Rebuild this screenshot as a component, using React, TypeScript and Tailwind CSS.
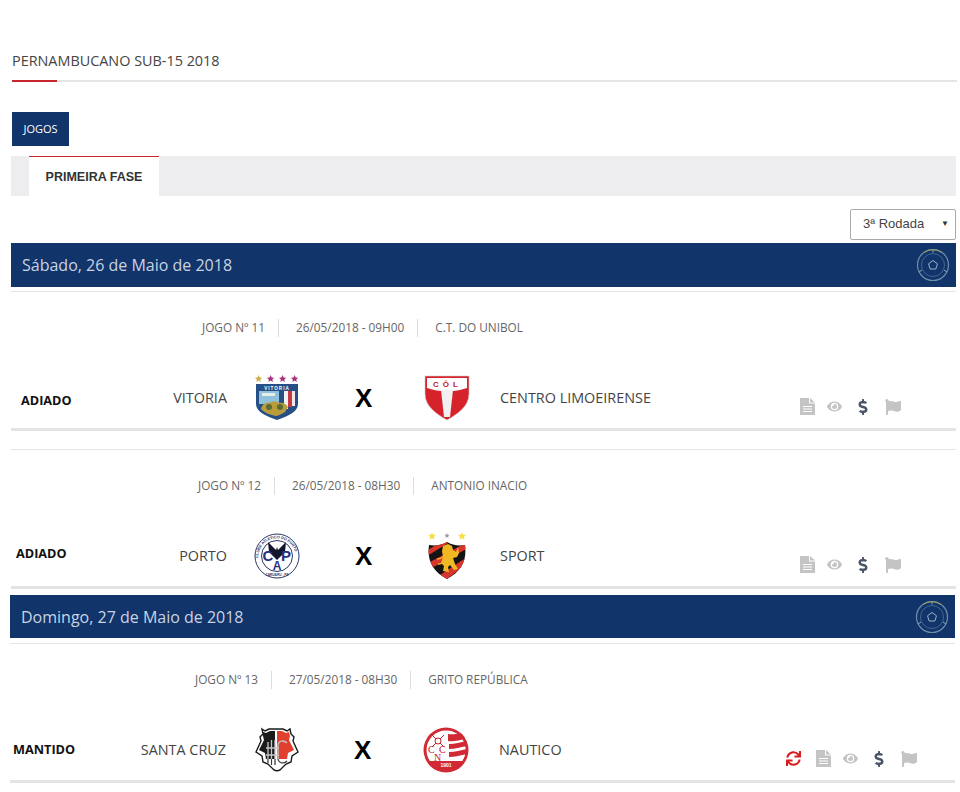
import type { ReactNode } from "react";
import { FaDollarSign, FaEye, FaFlag, FaSync } from "react-icons/fa";

const STAR = "M5 0l1.500 3.300 3.500.4-2.600 2.400.7 3.500L5 7.800 1.900 9.600l.7-3.500L0 3.700l3.500-.4z";

const VitoriaCrest = () => (
  <svg viewBox="0 0 46 46" className="h-[46px] w-[46px]">
    <defs>
      <clipPath id="vit-shield">
        <path d="M2 9h42v20c0 8-10 12-21 16C12 41 2 37 2 29z" />
      </clipPath>
    </defs>
    <path d={STAR} fill="#c9b04a" transform="translate(1 0) scale(.72)" />
    <path d={STAR} fill="#a6307a" transform="translate(13 0) scale(.72)" />
    <path d={STAR} fill="#a6307a" transform="translate(25 0) scale(.72)" />
    <path d={STAR} fill="#a6307a" transform="translate(37 0) scale(.72)" />
    <g clipPath="url(#vit-shield)">
      <rect width="46" height="46" fill="#254f85" />
      <rect x="5" y="16" width="23" height="13" fill="#8fc0dc" />
      <rect x="8" y="18" width="13" height="3" fill="#e4efe8" />
      <rect x="25" y="16" width="5" height="20" fill="#254f85" />
      <rect x="30" y="16" width="4" height="18" fill="#f2f2f2" />
      <rect x="34" y="16" width="4" height="16" fill="#c23a44" />
      <rect x="38" y="16" width="3" height="15" fill="#f2e6e6" />
      <path d="M7 34c1-4 4-7 8-6 3-2 8-2 10 0 4-1 7 1 9 4l-3 5c-5 3-8 4-9 4-6-1-11-3-15-7z" fill="#b99c3c" />
      <circle cx="15" cy="32" r="3" fill="#5c6a34" />
      <circle cx="26" cy="32" r="3" fill="#5c6a34" />
    </g>
    <text x="23" y="14.500" textAnchor="middle" fontSize="4.600" fontWeight="700" fill="#fff" fontFamily="'Liberation Sans', sans-serif" letterSpacing="1">VITORIA</text>
  </svg>
);

const LimoeirenseCrest = () => (
  <svg viewBox="0 0 46 46" className="h-[46px] w-[46px]">
    <path d="M1 1h44v18c0 12-11 20-22 26C12 39 1 31 1 19z" fill="#d5222b" stroke="#cfcfcf" strokeWidth=".6" />
    <path d="M3 3h40v10c-6 2-11 3-14 3H17c-3 0-8-1-14-3z" fill="#fff" />
    <path d="M17 15h12l-3 27h-6z" fill="#f1f1f1" />
    <text x="23.500" y="11.500" textAnchor="middle" fontSize="8" fontWeight="700" fill="#c8202a" fontFamily="'Liberation Sans', sans-serif" letterSpacing="4">CÔL</text>
  </svg>
);

const PortoCrest = () => (
  <svg viewBox="0 0 46 46" className="h-[46px] w-[46px]">
    <circle cx="23" cy="23" r="22" fill="#fff" stroke="#2a3566" strokeWidth="1" />
    <circle cx="23" cy="23" r="15.500" fill="#fff" stroke="#2a3566" strokeWidth="1" />
    <path id="porto-arc" d="M7 34A18.800 18.800 0 1 1 39 34" fill="none" />
    <text fontSize="3.800" fill="#2a3566" fontFamily="'Liberation Sans', sans-serif" fontWeight="700">
      <textPath href="#porto-arc" startOffset="12%">CLUBE ATLETICO DO PORTO</textPath>
    </text>
    <text x="23" y="43" textAnchor="middle" fontSize="3.200" fill="#2a3566" fontFamily="'Liberation Sans', sans-serif" fontWeight="700">CARUARU - PE</text>
    <path d="M14 9l8 8 1-3 1 3 8-8-1 10-5 5-3 3-3-3-5-5z" fill="#14162c" />
    <text x="14" y="28" textAnchor="middle" fontSize="15" fontWeight="700" fill="#26327e" fontFamily="'Liberation Sans', sans-serif">C</text>
    <text x="32" y="28" textAnchor="middle" fontSize="15" fontWeight="700" fill="#26327e" fontFamily="'Liberation Sans', sans-serif">P</text>
    <text x="23" y="37" textAnchor="middle" fontSize="12" fontWeight="700" fill="#26327e" fontFamily="'Liberation Sans', sans-serif">A</text>
  </svg>
);

const SportCrest = () => (
  <svg viewBox="0 0 46 46" className="h-[46px] w-[46px]">
    <defs>
      <clipPath id="sport-shield">
        <path d="M5 12c7 1 13 0 18-3 5 3 11 4 18 3 2 15-3 26-18 34C8 38 3 27 5 12z" />
      </clipPath>
    </defs>
    <path d={STAR} fill="#f4e04a" transform="translate(4 -1) scale(.8)" />
    <path d={STAR} fill="#f4e04a" transform="translate(34 -1) scale(.8)" />
    <path d={STAR} fill="#9a9aa0" transform="translate(20.500 0) scale(.5)" />
    <g clipPath="url(#sport-shield)">
      <rect width="46" height="46" fill="#141414" />
      <path d="M0 19L26 4l3 3L0 25zM0 32L46 8v6L2 38zM10 46l36-24v6L18 50z" fill="#d8362c" />
    </g>
    <path d="M19 13l5-2 4 2 1 4 3 2 2-5 1 6-2 4-4 1 2 6 3 5-4 1-4-5-2 2 1 5-6-1 1-5-3-3 2-6-1-6z" fill="#f0b823" />
    <path d="M13 26c3 0 5-1 7-3M14 31c3 0 5-1 6-3" stroke="#f0b823" strokeWidth="1.400" fill="none" />
  </svg>
);

const SantaCruzCrest = () => (
  <svg viewBox="0 0 46 46" className="h-[46px] w-[46px]">
    <path d="M9 2l3 2 4-2h14l4 2 3-2 1 5 3 3-1 4 5 11-6 4-1 6-5 2-6 6c-2 1-4 1-6 0l-6-6-5-2-1-6-6-4 5-11-1-4 3-3z" fill="#fff" stroke="#1a1a1a" strokeWidth="1.400" />
    <path d="M10 5l3 1 4-2h5v28H13l-1-6-6-3 5-10-1-4z" fill="#1b1b1b" />
    <path d="M36 5l-3 1-4-2h-5v28h10l1-6 6-3-5-10 1-4z" fill="#e2402f" />
    <g fill="none" stroke="#c8c8c8" strokeWidth="1.300">
      <path d="M15 15v21M18.500 13v25M22 13v25M13 21h13M13 28h13" />
      <path d="M34 16c-3-3-9-3-9 3v11c0 6 6 7 9 4" />
    </g>
    <g fill="none" stroke="#3a3a3a" strokeWidth="1.100">
      <path d="M15 32v4M18.500 32v6M22 32v6" />
      <path d="M25 32c1 5 6 5 9 2" />
    </g>
  </svg>
);

const NauticoCrest = () => (
  <svg viewBox="0 0 46 46" className="h-[46px] w-[46px]">
    <defs>
      <clipPath id="nautico-flag">
        <path d="M24 4h20v30H24z" />
      </clipPath>
    </defs>
    <circle cx="23" cy="23" r="22.500" fill="#d12a35" />
    <circle cx="23" cy="23" r="19.500" fill="#fff" />
    <g clipPath="url(#nautico-flag)">
      <circle cx="23" cy="23" r="19.500" fill="#fff" />
      <path d="M25 7c6 1 10-1 14 0l3 5c-6 1-11 3-17 2zM26 17c6 0 12-2 17-3l1 5c-7 1-12 3-18 3zM26 25c6 0 12-2 18-3v5c-6 1-12 3-18 3z" fill="#d12a35" />
    </g>
    <path d="M5 34h36c-4 7-10 11-18 11S9 41 5 34z" fill="#d12a35" />
    <text x="23" y="39.500" textAnchor="middle" fontSize="5" fontWeight="700" fill="#fff" fontFamily="'Liberation Sans', sans-serif">1901</text>
    <g fontFamily="'Liberation Serif', serif" fontSize="10" fill="#c5222d">
      <text x="5" y="26">C</text>
      <text x="16" y="26">C</text>
      <text x="11" y="33.500">N</text>
    </g>
    <path d="M9 8l12 12M21 8L9 20" stroke="#c5222d" strokeWidth="1" />
    <circle cx="15" cy="14" r="3" fill="#fff" stroke="#c5222d" strokeWidth="1" />
  </svg>
);

const BannerEmblem = () => (
  <svg viewBox="0 0 34 34" className="h-[34px] w-[34px]" fill="none">
    <circle cx="17" cy="17" r="15.500" stroke="#6f8fa8" strokeWidth="1.200" />
    <path d="M8 4.500A15.500 15.500 0 0 1 26 4.500" stroke="#8c9a6a" strokeWidth="1.200" />
    <circle cx="17" cy="17" r="11.500" stroke="#4f739c" strokeWidth=".8" />
    <path d="M17 12.500l4.500 3.300-1.700 5.200h-5.600l-1.700-5.200z" stroke="#9db1c8" strokeWidth="1" />
    <path d="M17 1.500v3M3 24l3-2M31 24l-3-2" stroke="#93a9bf" strokeWidth="1" />
  </svg>
);

const DocIcon = () => (
  <svg viewBox="0 0 15 17" className="h-[17px] w-[15px]" fill="currentColor">
    <path fillRule="evenodd" d="M0 0h9v5.500h6V17H0zM3 8v1h9V8zM3 10.500v1h9v-1zM3 13v1h9v-1z" />
    <path d="M10 0l5 4.500h-5z" />
  </svg>
);

type DayProps = { label: string; wrap: string };

const DayBanner = ({ label, wrap }: DayProps) => (
  <div className={`flex items-center justify-between bg-[#11346a] pl-[11px] pr-[6px] ${wrap}`}>
    <span className="text-[16px] text-[#c9d3e1]">{label}</span>
    <BannerEmblem />
  </div>
);

type MatchProps = {
  wrap: string;
  metaPad: string;
  game: string;
  date: string;
  place: string;
  status: string;
  statusClass: string;
  homeWidth: string;
  home: string;
  away: string;
  homeCrest: ReactNode;
  awayCrest: ReactNode;
  sync?: boolean;
  iconsPad: string;
};

const Match = (m: MatchProps) => (
  <div className={m.wrap}>
    <div className={`flex h-[18px] items-center text-[11.800px] text-[#666] ${m.metaPad}`}>
      <span className="border-r border-[#ddd] pr-[13px]">{m.game}</span>
      <span className="border-r border-[#ddd] pl-[17px] pr-[13px]">{m.date}</span>
      <span className="pl-[17px]">{m.place}</span>
    </div>
    <div className="mb-[3px] mt-[37px] flex h-[51px] items-center pb-[3px]">
      <span className={`shrink-0 text-[12.700px] font-bold text-[#111] ${m.statusClass}`}>{m.status}</span>
      <span className={`-mt-[1px] shrink-0 text-right text-[14.400px] text-[#444] ${m.homeWidth}`}>{m.home}</span>
      <div className="ml-[27px] shrink-0">{m.homeCrest}</div>
      <span className="ml-[55px] w-[16px] shrink-0 text-[26px] font-bold leading-none text-black [font-family:'Liberation_Sans',sans-serif]">X</span>
      <div className="ml-[53px] shrink-0">{m.awayCrest}</div>
      <span className="-mt-[1px] ml-[30px] text-[14.400px] text-[#444]">{m.away}</span>
      <div className={`ml-auto mt-[17px] flex items-center text-[#c4c4c4] ${m.iconsPad}`}>
        {m.sync && <FaSync className="mr-[15px] text-[15px] text-[#d81e1e]" />}
        <DocIcon />
        <FaEye className="ml-[12px] text-[15px]" />
        <FaDollarSign className="ml-[13px] text-[16px] text-[#4a5568]" />
        <FaFlag className="ml-[14px] text-[16px]" />
      </div>
    </div>
    <div className="h-[3px] bg-[#e4e4e4]" />
  </div>
);

export default function App() {
  return (
    <div className="h-[792px] w-[960px] overflow-hidden bg-white pt-[50px] [font-family:'Open_Sans',sans-serif]">
      <h1 className="ml-[12px] pb-[8px] text-[14.400px] leading-[22px] text-[#444]">PERNAMBUCANO SUB-15 2018</h1>
      <div className="ml-[12px] mr-[3px] flex h-[2px] bg-[#e6e6e6]">
        <div className="w-[45px] bg-[#c8262e]" />
      </div>

      <button className="ml-[12px] mt-[30px] block h-[34px] w-[57px] bg-[#11346a] text-center text-[11px] font-medium text-white">JOGOS</button>

      <div className="ml-[11px] mr-[4px] mt-[10px] h-[40px] bg-[#eeeef0] pl-[18px]">
        <div className="flex h-[40px] w-[130px] items-center justify-center border-t border-[#c8262e] bg-white pt-[1px] text-[12.500px] font-bold text-[#333] [font-family:'Liberation_Sans',sans-serif]">
          PRIMEIRA FASE
        </div>
      </div>

      <div className="mr-[4px] mt-[13px] flex justify-end">
        <div className="flex h-[31px] w-[106px] items-center justify-between rounded-[2px] border border-[#aaa] pb-[2px] pl-[12px] pr-[6px] text-[13px] text-[#444] [font-family:'Liberation_Sans',sans-serif]">
          <span>3ª Rodada</span>
          <span className="text-[8px] text-[#333]">▼</span>
        </div>
      </div>

      <DayBanner label="Sábado, 26 de Maio de 2018" wrap="ml-[11px] mr-[4px] mt-[3px] h-[44px]" />
      <div className="ml-[11px] mr-[4px] mt-[4px] h-px bg-[#e6e6e6]" />

      <Match
        wrap="ml-[11px] mr-[4px] mt-[27px]"
        metaPad="pl-[191px]"
        game="JOGO Nº 11"
        date="26/05/2018 - 09H00"
        place="C.T. DO UNIBOL"
        status="ADIADO"
        statusClass="ml-[10px] mt-[5px] w-[100px]"
        homeWidth="w-[106px]"
        home="VITORIA"
        away="CENTRO LIMOEIRENSE"
        homeCrest={<VitoriaCrest />}
        awayCrest={<LimoeirenseCrest />}
        iconsPad="pr-[55px]"
      />
      <div className="ml-[11px] mr-[4px] mt-[18px] h-px bg-[#e6e6e6]" />

      <Match
        wrap="ml-[11px] mr-[4px] mt-[27px]"
        metaPad="pl-[187px]"
        game="JOGO Nº 12"
        date="26/05/2018 - 08H30"
        place="ANTONIO INACIO"
        status="ADIADO"
        statusClass="ml-[5px] -mt-[5px] w-[100px]"
        homeWidth="w-[111px]"
        home="PORTO"
        away="SPORT"
        homeCrest={<PortoCrest />}
        awayCrest={<SportCrest />}
        iconsPad="pr-[55px]"
      />

      <DayBanner label="Domingo, 27 de Maio de 2018" wrap="ml-[10px] mr-[5px] mt-[6px] h-[43px]" />
      <div className="ml-[10px] mr-[5px] mt-[5px] h-px bg-[#e6e6e6]" />

      <Match
        wrap="ml-[10px] mr-[5px] mt-[27px]"
        metaPad="pl-[185px]"
        game="JOGO Nº 13"
        date="27/05/2018 - 08H30"
        place="GRITO REPÚBLICA"
        status="MANTIDO"
        statusClass="ml-[3px] w-[100px]"
        homeWidth="w-[113px]"
        home="SANTA CRUZ"
        away="NAUTICO"
        homeCrest={<SantaCruzCrest />}
        awayCrest={<NauticoCrest />}
        sync
        iconsPad="pr-[38px]"
      />
    </div>
  );
}
